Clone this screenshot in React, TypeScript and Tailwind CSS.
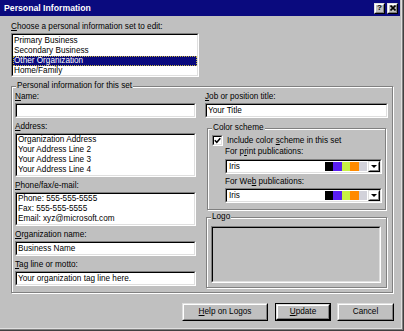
import type { ReactNode } from "react";

const font = { fontFamily: '"Liberation Sans", Arial, sans-serif' };

function Sunken({ className = "", children }: { className?: string; children?: ReactNode }) {
  return (
    <div className={"border border-t-[#808080] border-l-[#808080] border-b-white border-r-white " + className}>
      <div className="h-full overflow-hidden border border-t-black border-l-black border-b-[#dfdfdf] border-r-[#dfdfdf] bg-white">
        {children}
      </div>
    </div>
  );
}

function Raised({ className = "", children }: { className?: string; children?: ReactNode }) {
  return (
    <div className={"border border-t-[#dfdfdf] border-l-[#dfdfdf] border-b-black border-r-black " + className}>
      <div className="flex h-full items-center justify-center border border-t-white border-l-white border-b-[#808080] border-r-[#808080]">
        {children}
      </div>
    </div>
  );
}

function Group({ label, className = "", children }: { label: string; className?: string; children?: ReactNode }) {
  return (
    <div className={"relative border border-[#808080] shadow-[1px_1px_0_#fff,inset_1px_1px_0_#fff] " + className}>
      <span className="absolute -top-[6px] left-[4px] bg-[#c0c0c0] px-[1px] leading-[10px]">{label}</span>
      {children}
    </div>
  );
}

function Label({ children, className = "" }: { children: ReactNode; className?: string }) {
  return <div className={"h-[10px] leading-[10px] " + className}>{children}</div>;
}

function Combo() {
  return (
    <Sunken className="h-[15px] w-[157px]">
      <div className="flex h-full items-center">
        <span className="ml-[2px] flex-1 leading-[10px]">Iris</span>
        <div className="flex h-full py-[1px]">
          <div className="w-[8px] bg-black" />
          <div className="w-[9px] bg-[#5a1ef2]" />
          <div className="w-[8px] bg-[#c8f044]" />
          <div className="w-[9px] bg-[#ff8a00]" />
          <div className="w-[8px] bg-[#d2d2da]" />
        </div>
        <Raised className="ml-[1px] h-full w-[12px]">
          <svg width="6" height="4" viewBox="0 0 6 4">
            <path d="M0 0 H6 L3 3 Z" fill="black" />
          </svg>
        </Raised>
      </div>
    </Sunken>
  );
}

export default function App() {
  return (
    <div
      className="h-[331px] w-[404px] overflow-hidden bg-[#c0c0c0] text-[8.2px] text-black shadow-[inset_-1px_-1px_0_#404040,inset_-2px_-2px_0_#808080,inset_-3px_-3px_0_#dfdfdf]"
      style={font}
    >
      {/* Title bar */}
      <div className="flex h-[16px] w-[400px] items-center bg-[#0a0a7e] pl-[4px] pr-[2px]">
        <span className="flex-1 text-[8.7px] font-bold leading-[10px] text-white">Personal Information</span>
        <Raised className="h-[11px] w-[11px] bg-[#c0c0c0]">
          <span className="text-[8px] font-bold leading-[8px]">?</span>
        </Raised>
        <Raised className="ml-[2px] h-[11px] w-[11px] bg-[#c0c0c0]">
          <svg width="6" height="6" viewBox="0 0 6 6">
            <path d="M0.5 0.5 L5.5 5.5 M5.5 0.5 L0.5 5.5" stroke="black" strokeWidth="1.6" />
          </svg>
        </Raised>
      </div>

      <div className="pl-[11px]">
        <Label className="mt-[6px]">
          <span className="underline">C</span>hoose a personal information set to edit:
        </Label>
        <Sunken className="mt-[1px] h-[44px] w-[188px]">
          <div className="pt-[1px]">
            <div className="h-[10px] pl-[1px] leading-[10px]">Primary Business</div>
            <div className="h-[10px] pl-[1px] leading-[10px]">Secondary Business</div>
            <div className="h-[10px] border border-dotted border-[#c8b840] bg-[#0a0a7e] leading-[8px] text-white">Other Organization</div>
            <div className="h-[10px] pl-[1px] leading-[10px]">Home/Family</div>
          </div>
        </Sunken>

        <Group label="Personal information for this set" className="mt-[9px] h-[207px] w-[382px]">
          <div className="flex gap-[9px] pl-[3px] pt-[5px]">
            {/* Left column */}
            <div className="flex w-[181px] flex-col">
              <Label>
                <span className="underline">N</span>ame:
              </Label>
              <Sunken className="mt-[1px] h-[15px]" />

              <Label className="mt-[4px]">
                <span className="underline">A</span>ddress:
              </Label>
              <Sunken className="mt-[1px] h-[44px]">
                <div className="pl-[1px] leading-[10px]">
                  <div>Organization Address</div>
                  <div>Your Address Line 2</div>
                  <div>Your Address Line 3</div>
                  <div>Your Address Line 4</div>
                </div>
              </Sunken>

              <Label className="mt-[4px]">
                <span className="underline">P</span>hone/fax/e-mail:
              </Label>
              <Sunken className="mt-[1px] h-[34px]">
                <div className="pl-[1px] leading-[10px]">
                  <div>Phone: 555-555-5555</div>
                  <div>Fax: 555-555-5555</div>
                  <div>Email: xyz@microsoft.com</div>
                </div>
              </Sunken>

              <Label className="mt-[4px]">
                <span className="underline">O</span>rganization name:
              </Label>
              <Sunken className="mt-[1px] h-[15px]">
                <div className="pl-[1px] leading-[11px]">Business Name</div>
              </Sunken>

              <Label className="mt-[4px]">
                <span className="underline">T</span>ag line or motto:
              </Label>
              <Sunken className="mt-[1px] h-[15px]">
                <div className="pl-[1px] leading-[11px]">Your organization tag line here.</div>
              </Sunken>
            </div>

            {/* Right column */}
            <div className="flex w-[183px] flex-col">
              <Label>
                <span className="underline">J</span>ob or position title:
              </Label>
              <Sunken className="mt-[1px] h-[15px]">
                <div className="pl-[1px] leading-[11px]">Your Title</div>
              </Sunken>

              <Group label="Color scheme" className="ml-[2px] mt-[10px] h-[82px] w-[179px]">
                <div className="flex flex-col pl-[4px] pt-[6px]">
                  <div className="flex h-[11px] items-center">
                    <Sunken className="h-[11px] w-[11px]">
                      <svg width="7" height="7" viewBox="0 0 7 7" className="block">
                        <path d="M0.8 3.2 L2.8 5.3 L6.3 1.2" stroke="black" strokeWidth="1.5" fill="none" />
                      </svg>
                    </Sunken>
                    <span className="ml-[4px] leading-[10px]">
                      Include color <span className="underline">s</span>cheme in this set
                    </span>
                  </div>
                  <div className="ml-[13px] flex flex-col">
                    <Label className="mt-[1px]">
                      For p<span className="underline">r</span>int publications:
                    </Label>
                    <div className="mt-[2px]">
                      <Combo />
                    </div>
                    <Label className="mt-[3px]">
                      For We<span className="underline">b</span> publications:
                    </Label>
                    <div className="mt-[1px]">
                      <Combo />
                    </div>
                  </div>
                </div>
              </Group>

              <Group label="Logo" className="ml-[1px] mt-[7px] h-[71px] w-[181px]">
                <div className="pl-[4px] pt-[8px]">
                  <div className="h-[57px] w-[170px] border border-t-[#808080] border-l-[#808080] border-b-white border-r-white">
                    <div className="h-full border border-t-black border-l-black border-b-[#dfdfdf] border-r-[#dfdfdf] bg-[#c0c0c0]" />
                  </div>
                </div>
              </Group>
            </div>
          </div>
        </Group>

        {/* Buttons */}
        <div className="mt-[10px] flex w-[383px] justify-end">
          <Raised className="h-[18px] w-[86px]">
            <span className="leading-[10px]">
              <span className="underline">H</span>elp on Logos
            </span>
          </Raised>
          <div className="ml-[7px] h-[18px] w-[56px] border border-black">
            <Raised className="h-full w-full">
              <span className="leading-[10px]">
                <span className="underline">U</span>pdate
              </span>
            </Raised>
          </div>
          <Raised className="ml-[6px] h-[18px] w-[57px]">
            <span className="leading-[10px]">Cancel</span>
          </Raised>
        </div>
      </div>
    </div>
  );
}
